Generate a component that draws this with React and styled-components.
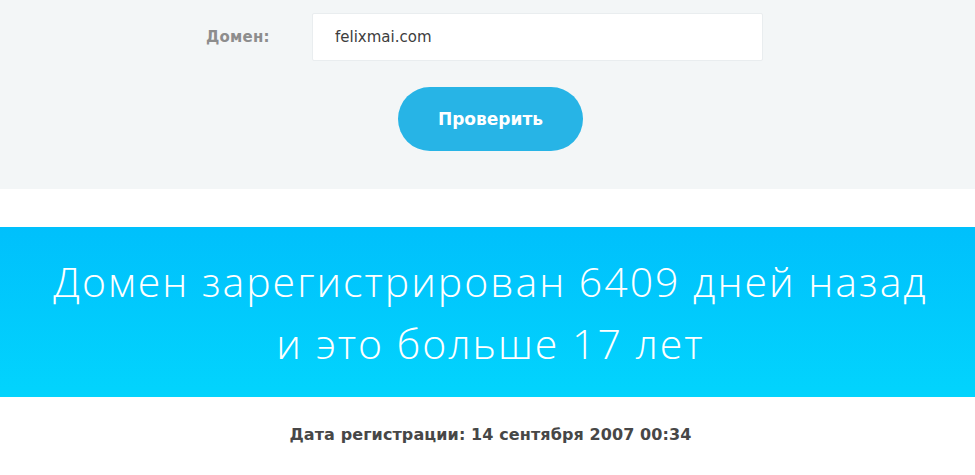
import styled, { createGlobalStyle } from "styled-components";

const GlobalStyle = createGlobalStyle`
  html, body {
    margin: 0;
    padding: 0;
    background: #ffffff;
  }
  body {
    font-family: "DejaVu Sans", "Open Sans", sans-serif;
  }
`;

const Page = styled.div`
  padding-left: 6px;
`;

const CheckSection = styled.section`
  background: #f3f6f7;
  padding: 13px 0 38px;
  margin-left: -6px;
  padding-left: 6px;
`;

const FormRow = styled.div`
  display: flex;
  justify-content: center;
  align-items: center;
  padding-right: 12px;
`;

const Label = styled.label`
  width: 106px;
  font-size: 15px;
  font-weight: 700;
  color: #8d8d8d;
  letter-spacing: 0.2px;
`;

const Input = styled.input`
  box-sizing: border-box;
  width: 451px;
  height: 48px;
  padding: 0 22px;
  border: 1px solid #e9edef;
  border-radius: 2px;
  background: #ffffff;
  font-family: "DejaVu Sans", sans-serif;
  font-size: 15px;
  color: #3d3d3d;
  outline: none;
`;

const ButtonRow = styled.div`
  display: flex;
  justify-content: center;
  margin-top: 26px;
`;

const CheckButton = styled.button`
  width: 185px;
  height: 64px;
  border: none;
  border-radius: 32px;
  background: #27b4e6;
  color: #ffffff;
  font-family: "DejaVu Sans", sans-serif;
  font-size: 17px;
  font-weight: 700;
  cursor: pointer;
`;

const Spacer = styled.div`
  height: 38px;
`;

const ResultBand = styled.section`
  margin-left: -6px;
  padding-left: 6px;
  height: 170px;
  display: flex;
  align-items: center;
  justify-content: center;
  background: linear-gradient(180deg, #00c0fc 0%, #02d4fd 100%);
`;

const Headline = styled.h1`
  margin: 0;
  font-family: "Open Sans", sans-serif;
  font-weight: 300;
  font-size: 41px;
  letter-spacing: 2px;
  line-height: 62px;
  color: #ffffff;
  text-align: center;
`;

const Details = styled.div`
  padding-top: 28px;
  text-align: center;
`;

const DetailLine = styled.p`
  margin: 0;
  font-size: 16px;
  font-weight: 700;
  letter-spacing: 0.1px;
  color: #474747;
`;

export default function App() {
  return (
    <Page>
      <GlobalStyle />
      <CheckSection>
        <FormRow>
          <Label htmlFor="domain">Домен:</Label>
          <Input id="domain" defaultValue="felixmai.com" />
        </FormRow>
        <ButtonRow>
          <CheckButton>Проверить</CheckButton>
        </ButtonRow>
      </CheckSection>
      <Spacer />
      <ResultBand>
        <Headline>
          Домен зарегистрирован 6409 дней назад
          <br />и это больше 17 лет
        </Headline>
      </ResultBand>
      <Details>
        <DetailLine>Дата регистрации: 14 сентября 2007 00:34</DetailLine>
      </Details>
    </Page>
  );
}
